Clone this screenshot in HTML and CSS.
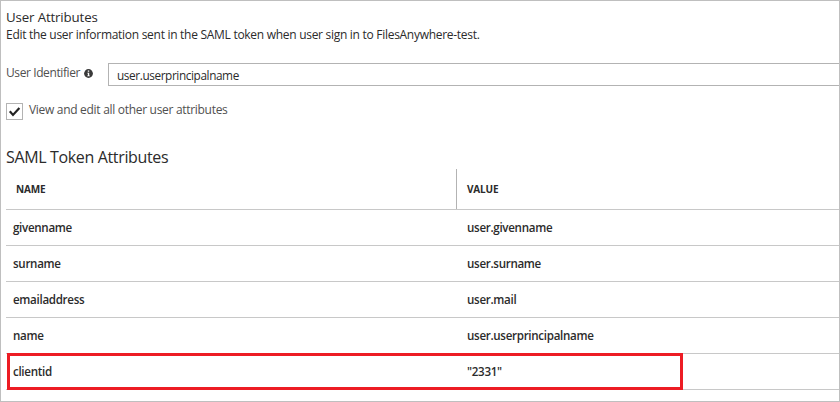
FILE: index.html
```html
<!DOCTYPE html>
<html lang="en">
<head>
<meta charset="utf-8">
<title>User Attributes</title>
<link rel="stylesheet" href="styles.css">
</head>
<body>
<main class="panel">
  <h1 class="title">User Attributes</h1>
  <p class="description">Edit the user information sent in the SAML token when user sign in to FilesAnywhere-test.</p>
  <div class="field">
    <span class="label">User Identifier</span>
    <svg class="info" viewBox="0 0 9 9"><circle cx="4.5" cy="4.5" r="4.4" fill="#3a3a3a"/><path d="M3.8 1.5h1.4v1.3H3.8zM3.3 3.7h1.9v2.7h.6v.8H3.3v-.8h.6V4.5h-.6z" fill="#fff"/></svg>
    <div class="input">user.userprincipalname</div>
  </div>
  <div class="option">
    <span class="checkbox"><svg viewBox="0 0 15 15"><path d="M2.8 7.3 6 10.9 12.4 4" fill="none" stroke="#222" stroke-width="2.2"/></svg></span>
    <span class="option-text">View and edit all other user attributes</span>
  </div>
  <h2 class="subtitle">SAML Token Attributes</h2>
  <div class="table">
    <div class="row head"><span class="name">NAME</span><span class="value">VALUE</span></div>
    <div class="row"><span class="name">givenname</span><span class="value">user.givenname</span></div>
    <div class="row"><span class="name">surname</span><span class="value">user.surname</span></div>
    <div class="row"><span class="name">emailaddress</span><span class="value">user.mail</span></div>
    <div class="row"><span class="name">name</span><span class="value">user.userprincipalname</span></div>
    <div class="row marked"><span class="name">clientid</span><span class="value">"2331"</span></div>
  </div>
</main>
</body>
</html>
```
FILE: styles.css
```css
*, *::after { box-sizing: border-box; }
body {
  margin: 0;
  font: 12px/16px "Open Sans", "Noto Sans", sans-serif;
  color: #2b2b2b;
  background: #fff;
}
.panel {
  width: 840px;
  height: 402px;
  padding: 8px 0 0 5px;
  border: 1px solid #bfbfbf;
  overflow: hidden;
  white-space: nowrap;
}
.title { margin: 0; font-size: 13.3px; line-height: 16px; font-weight: 400; letter-spacing: -0.15px; }
.description { margin: 2px 0 0; letter-spacing: -0.285px; }
.field { display: flex; align-items: center; height: 23px; margin-top: 20px; }
.label { width: 78px; margin-top: -3px; color: #505050; letter-spacing: -0.4px; }
.info { width: 9px; height: 9px; margin-top: -2px; }
.input {
  flex: 1;
  height: 23px;
  margin-left: 15px;
  padding-left: 8px;
  border: 1px solid #b3b3b3;
  border-right: 0;
  font-size: 11.8px;
  line-height: 22px;
  letter-spacing: -0.4px;
}
.option { display: flex; height: 17px; margin-top: 17px; color: #505050; letter-spacing: -0.3px; }
.checkbox { width: 17px; height: 17px; margin-right: 6px; border: 1px solid #b3b3b3; }
.checkbox svg { display: block; width: 15px; height: 15px; }
.option-text { margin-top: -1px; }
.subtitle { margin: 26px 0 0; height: 23px; font-size: 16px; line-height: 22px; font-weight: 400; letter-spacing: -0.35px; }
.row { display: flex; height: 36px; border-bottom: 1px solid #c8c8c8; font-size: 11.6px; font-weight: 600; line-height: 36px; letter-spacing: -0.31px; }
.name { width: 451px; padding-left: 7px; }
.value { padding-left: 10px; }
.head { height: 41px; font-size: 10px; font-weight: 700; line-height: 40px; letter-spacing: -0.15px; }
.head .name { padding-left: 10px; border-right: 1px solid #b3b3b3; }
.marked { position: relative; }
.marked::after {
  content: "";
  position: absolute;
  left: 1px;
  top: -1px;
  width: 676px;
  height: 37px;
  border: 3px solid #ed1c24;
}
```
